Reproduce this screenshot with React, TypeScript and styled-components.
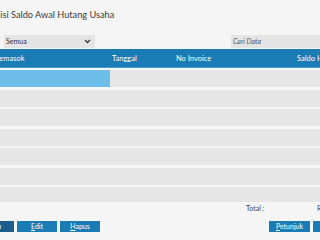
import React from 'react';
import styled, { createGlobalStyle } from 'styled-components';

const GlobalStyle = createGlobalStyle`
  html, body {
    margin: 0;
    padding: 0;
    background: #f5f5f5;
    overflow: hidden;
  }
  body {
    font-family: Lato, "Open Sans", "Noto Sans", sans-serif;
    color: #333;
  }
  #root {
    width: 320px;
    height: 240px;
    overflow: hidden;
  }
`;

const Page = styled.div`
  width: 410px;
  height: 240px;
  margin-left: -50px;
  display: flex;
  flex-direction: column;
`;

const Title = styled.h1`
  margin: 0;
  padding: 9px 0 0 40px;
  height: 26px;
  box-sizing: border-box;
  font-size: 9.2px;
  font-weight: 400;
  line-height: 12px;
  color: #3a3a3a;
  white-space: nowrap;
`;

const FilterRow = styled.div`
  display: flex;
  align-items: center;
  height: 14px;
  margin-top: 8px;
  padding-right: 6px;
`;

const FilterLabel = styled.label`
  width: 52px;
  text-align: right;
  font-size: 7px;
  color: #444;
  padding-right: 2px;
  box-sizing: border-box;
`;

const Select = styled.div`
  width: 91px;
  height: 13px;
  margin-left: 2px;
  background: #e4e4e4;
  display: flex;
  align-items: center;
  justify-content: space-between;
  padding: 0 4px 0 2px;
  box-sizing: border-box;
  font-size: 7px;
  color: #333;
`;

const Search = styled.div`
  margin-left: auto;
  width: 123px;
  height: 13px;
  background: #e4e4e4;
  display: flex;
  align-items: center;
  padding-left: 2px;
  box-sizing: border-box;
  font-size: 7px;
  font-style: italic;
  color: #555;
`;

const Table = styled.div`
  margin-top: 1px;
  margin-left: 40px;
  display: flex;
  flex-direction: column;
`;

const cols = '120px 64px 121px 1fr';

const HeaderRow = styled.div`
  display: grid;
  grid-template-columns: ${cols};
  height: 18px;
  align-items: center;
  background: #1a7cb5;
  border-bottom: 1px solid #4a9ccb;
  color: #fff;
  font-size: 7.5px;
`;

const HeadCell = styled.div<{ $first?: boolean }>`
  padding-left: ${({ $first }) => ($first ? '5px' : '2px')};
  white-space: nowrap;
  overflow: hidden;
`;

const Body = styled.div`
  height: 132px;
  margin-top: 2px;
  overflow: hidden;
  display: flex;
  flex-direction: column;
  gap: 2.5px;
`;

const Row = styled.div`
  display: grid;
  grid-template-columns: ${cols};
  height: 17px;
  flex-shrink: 0;
  background: #e6e6e6;
`;

const Cell = styled.div<{ $selected?: boolean }>`
  background: ${({ $selected }) => ($selected ? '#6dbde9' : 'transparent')};
`;

const TotalRow = styled.div`
  display: flex;
  justify-content: flex-end;
  align-items: center;
  height: 12px;
  padding-right: 6px;
  font-size: 7px;
  color: #444;
`;

const TotalLabel = styled.span`
  width: 71px;
`;

const TotalValue = styled.span`
  width: 37px;
`;

const ButtonBar = styled.div`
  display: flex;
  align-items: center;
  margin-top: 7px;
  padding: 0 6px 0 24px;
`;

const ButtonGroup = styled.div<{ $right?: boolean }>`
  display: flex;
  gap: 3px;
  margin-left: ${({ $right }) => ($right ? 'auto' : '0')};
`;

const Button = styled.button<{ $active?: boolean; $w?: number }>`
  width: ${({ $w }) => $w ?? 40}px;
  height: 11px;
  padding: 0;
  border: none;
  background: ${({ $active }) => ($active ? '#1c5d8a' : '#1a7cb5')};
  color: #fff;
  font-family: inherit;
  font-size: 7px;
  line-height: 11px;
  cursor: pointer;

  u {
    text-decoration: underline;
  }
`;

const Chevron = () => (
  <svg width="7" height="5" viewBox="0 0 7 5">
    <path d="M1 1l2.5 2.5L6 1" fill="none" stroke="#333" strokeWidth="1.3" />
  </svg>
);

const rows = Array.from({ length: 8 }, (_, i) => i);

export default function App() {
  return (
    <>
      <GlobalStyle />
      <Page>
        <Title>Edisi Saldo Awal Hutang Usaha</Title>
        <FilterRow>
          <FilterLabel>Pemasok :</FilterLabel>
          <Select>
            <span>Semua</span>
            <Chevron />
          </Select>
          <Search>Cari Data</Search>
        </FilterRow>
        <Table>
          <HeaderRow>
            <HeadCell $first>Pemasok</HeadCell>
            <HeadCell>Tanggal</HeadCell>
            <HeadCell>No Invoice</HeadCell>
            <HeadCell>Saldo Hutang</HeadCell>
          </HeaderRow>
          <Body>
            {rows.map((i) => (
              <Row key={i}>
                <Cell $selected={i === 0} />
                <Cell />
                <Cell />
                <Cell />
              </Row>
            ))}
          </Body>
        </Table>
        <TotalRow>
          <TotalLabel>Total :</TotalLabel>
          <TotalValue>Rp 0</TotalValue>
        </TotalRow>
        <ButtonBar>
          <ButtonGroup>
            <Button $active><u>B</u>aru</Button>
            <Button><u>E</u>dit</Button>
            <Button><u>H</u>apus</Button>
          </ButtonGroup>
          <ButtonGroup $right>
            <Button $w={41}><u>P</u>etunjuk</Button>
            <Button $w={41}><u>K</u>eluar</Button>
          </ButtonGroup>
        </ButtonBar>
      </Page>
    </>
  );
}
